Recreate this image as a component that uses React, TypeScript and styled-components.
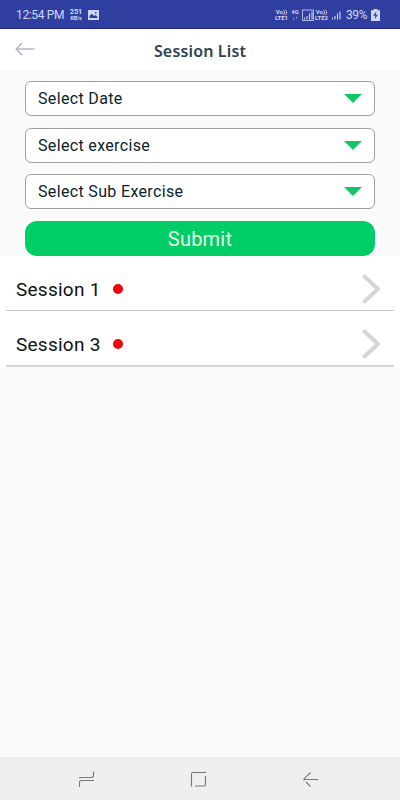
import React from "react";
import styled, { createGlobalStyle } from "styled-components";

const GlobalStyle = createGlobalStyle`
  * { box-sizing: border-box; }
  body { margin: 0; background: #fafafa; font-family: Roboto, sans-serif; }
`;

const Screen = styled.div`
  display: flex;
  flex-direction: column;
  width: 400px;
  height: 800px;
  background: #fafafa;
  overflow: hidden;
`;

const StatusBar = styled.div`
  display: flex;
  align-items: center;
  height: 29px;
  flex: none;
  padding: 1px 20px 0 16px;
  background: #303f9f;
  border-bottom: 1px solid #182486;
  color: #ccd6ff;
  font-size: 12px;
`;

const Clock = styled.span`
  width: 54px;
  white-space: nowrap;
  letter-spacing: -0.35px;
`;

const Stack = styled.span<{ $width: number }>`
  display: flex;
  flex-direction: column;
  align-items: center;
  width: ${(p) => p.$width}px;
  font-size: 6px;
  line-height: 6px;
  font-weight: 700;
  white-space: nowrap;
`;

const Speed = styled(Stack)`
  font-size: 7.5px;
  line-height: 7px;
  letter-spacing: -0.2px;

  small {
    font-size: 5.5px;
    line-height: 6px;
  }
`;

const StatusIcons = styled.div`
  display: flex;
  align-items: center;
  margin-left: auto;
`;

const Battery = styled.span`
  width: 25px;
  margin-left: 4px;
  white-space: nowrap;
  letter-spacing: -0.4px;
`;

const Icon = styled.svg<{ $left?: number }>`
  display: block;
  flex: none;
  margin-left: ${(p) => p.$left ?? 0}px;
`;

const AppBar = styled.header`
  display: grid;
  grid-template-columns: 50px 1fr 50px;
  align-items: center;
  height: 41px;
  flex: none;
  padding-bottom: 1px;
  background: #fff;
`;

const Title = styled.h1`
  margin: 4px 0 0;
  text-align: center;
  font: 600 16px/22px "Noto Sans", sans-serif;
  letter-spacing: 0.15px;
  color: #30434f;
`;

const Form = styled.form`
  display: flex;
  flex-direction: column;
  gap: 11.6px;
  height: 186px;
  flex: none;
  padding: 11.3px 25px 0;
`;

const SelectField = styled.div`
  display: flex;
  align-items: center;
  justify-content: space-between;
  height: 35px;
  flex: none;
  padding: 0 12px;
  border: 1px solid #a0a0a3;
  border-radius: 6px;
  background: #fff;
  color: #0c222c;
  font-size: 16px;
`;

const Label = styled.span`
  letter-spacing: 0.34px;
`;

const Submit = styled.button`
  height: 35px;
  flex: none;
  padding: 1px 0 0;
  border: 0;
  border-radius: 12px;
  background: #00cd65;
  color: #e4fff0;
  font: 400 20px/24px Roboto, sans-serif;
  letter-spacing: 0.2px;
`;

const List = styled.div`
  flex: 1;
`;

const SessionRow = styled.div`
  display: flex;
  align-items: center;
  height: 55.3px;
  padding: 10px 19px 0 16px;
  background: linear-gradient(#bdbdbd, #bdbdbd) center bottom / 388px 1px no-repeat #fff;
  color: #111;
  font-size: 19px;

  &:last-child {
    background: linear-gradient(#d4d4d4, #d4d4d4) center bottom / 388px 2px no-repeat #fff;
  }
`;

const SessionName = styled.span`
  width: 97px;
  padding-top: 2px;
  letter-spacing: 0.25px;
`;

const Dot = styled.span`
  width: 10px;
  height: 10px;
  margin-right: auto;
  border-radius: 50%;
  background: #ee0505;
`;

const NavBar = styled.nav`
  display: flex;
  align-items: center;
  justify-content: space-between;
  height: 43px;
  flex: none;
  padding: 1px 81px 0 78px;
  background: #efefef;
`;

const Signal = ({ boxed }: { boxed?: boolean }) => (
  <Icon width="12" height="12" viewBox="0 0 12 12" fill="none" stroke="#ccd6ff" $left={1}>
    {boxed && <rect x="0.5" y="1" width="11" height="10.5" strokeWidth="0.8" />}
    <path d="M2.5 8.5V10.5M5 7V10.5M7.5 4.5V10.5M10 2.5V10.5" strokeWidth="1.1" />
  </Icon>
);

const fields = ["Select Date", "Select exercise", "Select Sub Exercise"];

export default function App() {
  return (
    <>
      <GlobalStyle />
      <Screen>
        <StatusBar>
          <Clock>12:54 PM</Clock>
          <Speed $width={12}><span>251</span><small>KB/s</small></Speed>
          <Icon width="11" height="10" viewBox="0 0 11 10" $left={6}>
            <rect width="11" height="10" rx="0.6" fill="#ccd6ff" />
            <path d="M1.5 8V6L4 3.8L6 6L7.5 5L9.5 7V8Z" fill="#303f9f" />
            <circle cx="7.8" cy="2.8" r="0.9" fill="#303f9f" />
          </Icon>
          <StatusIcons>
            <Stack $width={15}><span>Vo))</span><span>LTE1</span></Stack>
            <Stack $width={12}><span>4G</span><span>↓↑</span></Stack>
            <Signal boxed />
            <Stack $width={15}><span>Vo))</span><span>LTE2</span></Stack>
            <Signal />
            <Battery>39%</Battery>
            <Icon width="9" height="12" viewBox="0 0 9 12">
              <path d="M2.5 0H6.5V1.2H9V12H0V1.2H2.5Z" fill="#ccd6ff" />
              <path d="M5.3 2.5L2 6.8H4.2L3.7 10L7 5.7H4.8Z" fill="#303f9f" />
            </Icon>
          </StatusIcons>
        </StatusBar>
        <AppBar>
          <Icon width="20" height="14" viewBox="0 0 20 14" $left={15} fill="none" stroke="#b3bbc1" strokeWidth="1.6" strokeLinecap="round" strokeLinejoin="round">
            <path d="M19 7H1.5M6.5 1.5L1.2 7L6.5 12.5" />
          </Icon>
          <Title>Session List</Title>
        </AppBar>
        <Form>
          {fields.map((text) => (
            <SelectField key={text}>
              <Label>{text}</Label>
              <Icon width="18" height="9" viewBox="0 0 18 9">
                <path d="M0 0H18L9 9Z" fill="#10c768" />
              </Icon>
            </SelectField>
          ))}
          <Submit type="button">Submit</Submit>
        </Form>
        <List>
          {["Session 1", "Session 3"].map((name) => (
            <SessionRow key={name}>
              <SessionName>{name}</SessionName>
              <Dot />
              <Icon width="19" height="30" viewBox="0 0 19 30" fill="none" stroke="#d6d6d6" strokeWidth="4" strokeLinecap="round" strokeLinejoin="round">
                <path d="M2.5 2.5L16 15L2.5 27.5" />
              </Icon>
            </SessionRow>
          ))}
        </List>
        <NavBar>
          <Icon width="17" height="18" viewBox="0 0 17 18" fill="none" stroke="#777" strokeWidth="1.1">
            <path d="M1 7.5H13.5Q15.5 7.5 15.5 5.5V1.5M16 10.5H3.5Q1.5 10.5 1.5 12.5V17" />
          </Icon>
          <Icon width="17" height="17" viewBox="0 0 17 17" fill="none" stroke="#777" strokeWidth="1.1">
            <path d="M1.5 15.5V3Q1.5 1.5 3 1.5H16M15.5 5V13.5Q15.5 15 14 15H5" />
          </Icon>
          <Icon width="17" height="17" viewBox="0 0 17 17" fill="none" stroke="#777" strokeWidth="1.1">
            <path d="M16 8.5H2M8.5 1.5L2.5 7.3Q1.3 8.5 2.5 9.2M4 11L8.5 15.5" />
          </Icon>
        </NavBar>
      </Screen>
    </>
  );
}
